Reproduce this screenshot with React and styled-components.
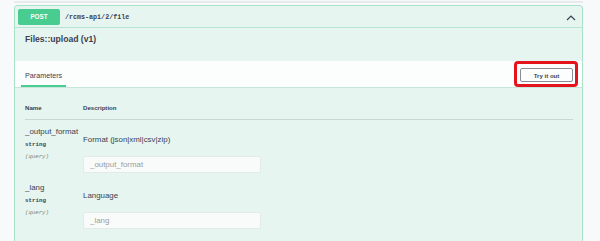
import React from 'react'
import styled, { createGlobalStyle } from 'styled-components'

const GlobalStyle = createGlobalStyle`
  html, body {
    margin: 0;
    padding: 0;
    background: #f8f9fb;
    font-family: 'Liberation Sans', Arial, sans-serif;
    color: #3b4151;
  }
`

const Page = styled.div`
  width: 600px;
  height: 241px;
  overflow: hidden;
  padding: 1px 17px 0 14px;
  box-sizing: border-box;
`

const TagRule = styled.div`
  height: 2px;
  background: #e9eaec;
`

const Opblock = styled.div`
  margin-top: 2px;
  background: #e6f5f0;
  border: 1px solid #a9e2c8;
  border-radius: 3px;
`

const Summary = styled.div`
  display: flex;
  align-items: center;
  height: 21px;
  padding: 0 3px;
  border-bottom: 1px solid #b7e4d2;
`

const MethodBadge = styled.span`
  display: flex;
  align-items: center;
  justify-content: center;
  width: 42px;
  height: 16px;
  border-radius: 2px;
  background: #49cc90;
  color: #fff;
  font-size: 6.3px;
  font-weight: 700;
`

const Path = styled.span`
  margin-left: 5px;
  flex: 1;
  font-family: 'Liberation Mono', monospace;
  font-size: 6.7px;
  font-weight: 700;
  color: #3b4151;
`

const Chevron = styled.svg`
  margin-right: 3px;
  margin-top: 2px;
`

const DescWrap = styled.div`
  height: 33px;
  padding: 5px 10px 0;
  box-sizing: border-box;
  font-size: 8.6px;
  font-weight: 700;
  line-height: 12px;
`

const SectionHeader = styled.div`
  display: flex;
  justify-content: space-between;
  align-items: stretch;
  padding: 0 4px 0 6px;
  background: rgba(255, 255, 255, 0.85);
  border-bottom: 1px solid #c9e6db;
`

const Tab = styled.div`
  align-self: flex-end;
  padding: 9px 4px 4px;
  font-size: 7.2px;
  line-height: 10px;
  color: #3b4151;
  border-bottom: 2px solid #49cc90;
`

const Highlight = styled.div`
  display: flex;
  align-items: center;
  padding: 4px 2px 2px 3px;
  border: 3px solid #e5141c;
  border-radius: 4px;
`

const TryButton = styled.button`
  width: 53px;
  height: 14px;
  padding: 0;
  border: 1px solid #8a8d93;
  border-radius: 2px;
  background: transparent;
  color: #3b4151;
  font-family: 'Liberation Sans', Arial, sans-serif;
  font-size: 6.1px;
  font-weight: 700;
`

const Table = styled.div`
  padding: 15px 9px 0 10px;
`

const Row = styled.div`
  display: grid;
  grid-template-columns: 58px 1fr;
  padding: ${p => (p.$head ? '0 0 6px' : '7px 0 3px')};
  border-bottom: ${p => (p.$head ? '1px solid #c6d8d2' : 'none')};
`

const HeadCell = styled.div`
  font-size: 6.1px;
  font-weight: 700;
  line-height: 10px;
`

const NameCell = styled.div`
  display: flex;
  flex-direction: column;
  gap: 2px;
`

const ParamName = styled.div`
  font-size: 7.9px;
  line-height: 10px;
  color: #3b4151;
`

const ParamType = styled.div`
  margin-top: 1px;
  font-family: 'Liberation Mono', monospace;
  font-size: 5.8px;
  font-weight: 700;
  line-height: 10px;
`

const ParamIn = styled.div`
  font-family: 'Liberation Mono', monospace;
  font-size: 5.7px;
  font-style: italic;
  line-height: 10px;
  color: #808080;
`

const DescCell = styled.div`
  padding-top: 8px;
`

const DescText = styled.div`
  font-size: 7.9px;
  line-height: 10px;
`

const Field = styled.input`
  display: block;
  margin-top: 11px;
  width: 178px;
  height: 17px;
  box-sizing: border-box;
  padding: 0 6px;
  border: 1px solid #e3ebe8;
  border-radius: 2px;
  background: #f9fbfa;
  font-family: 'Liberation Sans', Arial, sans-serif;
  font-size: 7.9px;
  outline: none;
  &::placeholder {
    color: #9b9b9b;
  }
`

const params = [
  { name: '_output_format', desc: 'Format (json|xml|csv|zip)' },
  { name: '_lang', desc: 'Language' },
  { name: '_charset', desc: 'Charset' },
]

const App = () => (
  <>
    <GlobalStyle />
    <Page>
      <TagRule />
      <Opblock>
        <Summary>
          <MethodBadge>POST</MethodBadge>
          <Path>/rcms-api/2/file</Path>
          <Chevron width="10" height="7" viewBox="0 0 10 7">
            <polyline points="1,6 5,2 9,6" fill="none" stroke="#3b4151" strokeWidth="1.2" />
          </Chevron>
        </Summary>
        <DescWrap>Files::upload (v1)</DescWrap>
        <SectionHeader>
          <Tab>Parameters</Tab>
          <Highlight>
            <TryButton>Try it out</TryButton>
          </Highlight>
        </SectionHeader>
        <Table>
          <Row $head>
            <HeadCell>Name</HeadCell>
            <HeadCell>Description</HeadCell>
          </Row>
          {params.map(p => (
            <Row key={p.name}>
              <NameCell>
                <ParamName>{p.name}</ParamName>
                <ParamType>string</ParamType>
                <ParamIn>(query)</ParamIn>
              </NameCell>
              <DescCell>
                <DescText>{p.desc}</DescText>
                <Field placeholder={p.name} />
              </DescCell>
            </Row>
          ))}
        </Table>
      </Opblock>
    </Page>
  </>
)

export default App
